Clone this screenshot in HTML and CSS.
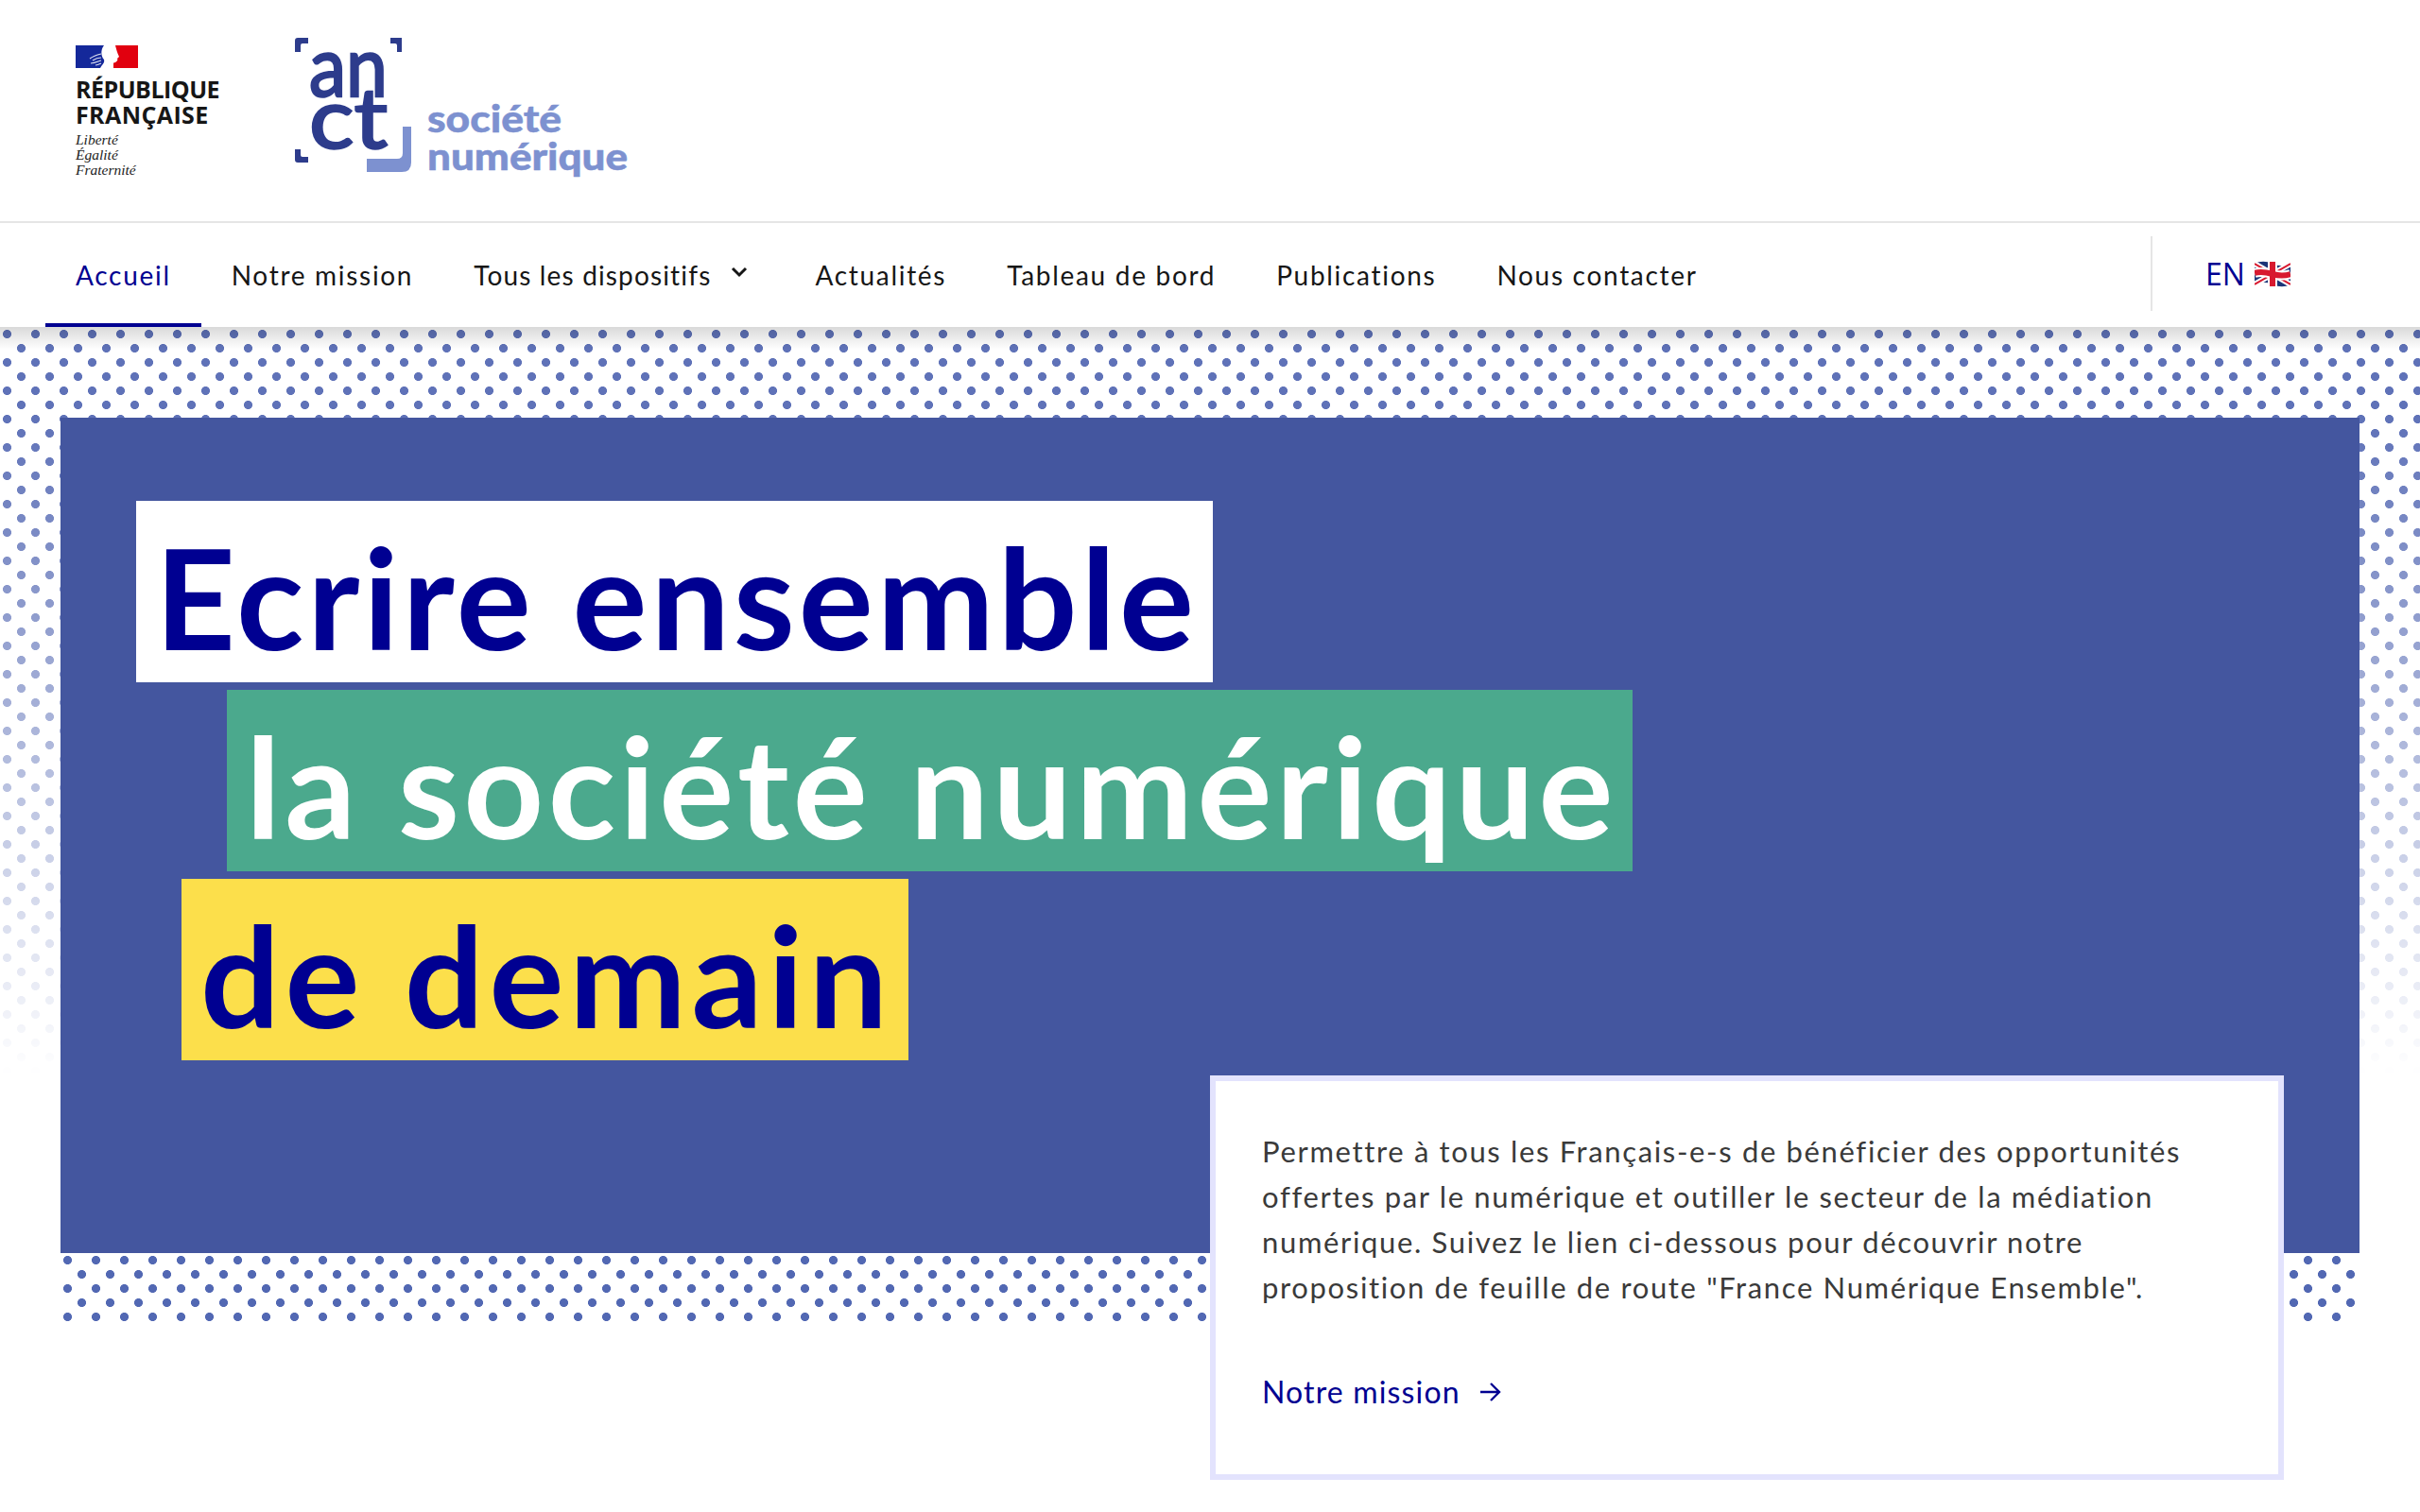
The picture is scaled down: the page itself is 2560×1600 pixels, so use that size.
FILE: index.html
```html
<!DOCTYPE html>
<html lang="fr">
<head>
	<meta charset="UTF-8">
	<title>Société numérique</title>
	<link rel="stylesheet" href="styles.css">
</head>
<body>
	<header class="top">
		<div class="rf">
			<svg class="rf-flag" viewBox="0 0 66 24" width="66" height="24">
				<rect width="66" height="24" fill="#fff"/>
				<rect width="34" height="24" fill="#14289a"/>
				<rect x="40" width="26" height="24" fill="#e1000f"/>
				<path d="M30 0H42C43 4 44 8 46 12L44 14C45 15 44 17 42 18C40 19 37 19 37 21L40 24H26C28 20 31 19 30 15C27 12 26 5 30 0Z" fill="#fff"/>
				<path d="M15 14c4-3 8-4 12-5M18 16c3-2 6-3 9-3M16 19c4 0 8-2 11-3M21 21c2 0 4-1 6-2" fill="none" stroke="#fff" stroke-width="1.1" opacity=".85"/>
			</svg>
			<p class="rf-name">RÉPUBLIQUE<span class="rf-second">FRANÇAISE</span></p>
			<p class="rf-motto">Liberté<br>Égalité<br>Fraternité</p>
		</div>
		<svg class="anct" viewBox="0 0 360 150" width="360" height="150">
			<path d="M2 17V5q0-3 3-3H16V8H10Q8 8 8 10V17Z" fill="#2d3c8c"/>
			<path d="M115 2H103V8H108Q110 8 110 10V17H115Z" fill="#2d3c8c"/>
			<path d="M2 120V131q0 3 3 3H16V128H10Q8 128 8 126V120Z" fill="#2d3c8c"/>
			<path d="M116 96H125V134Q125 144 115 144H78V130H110Q116 130 116 124Z" fill="#7d91d0"/>
			<text class="anct-big" x="17" y="64" textLength="83" lengthAdjust="spacingAndGlyphs">an</text>
			<text class="anct-big" x="17" y="119" textLength="83" lengthAdjust="spacingAndGlyphs">ct</text>
			<text class="anct-small" x="142" y="102" textLength="142" lengthAdjust="spacingAndGlyphs">société</text>
			<text class="anct-small" x="142" y="142" textLength="212" lengthAdjust="spacingAndGlyphs">numérique</text>
		</svg>
	</header>

	<nav class="nav">
		<ul class="nav-list">
			<li class="nav-item active">Accueil</li>
			<li class="nav-item">Notre mission</li>
			<li class="nav-item nav-tous">Tous les dispositifs<svg class="chevron" viewBox="0 0 20 12" width="20" height="12"><path d="M3 2l7 7 7-7" fill="none" stroke="#161616" stroke-width="3"/></svg></li>
			<li class="nav-item">Actualités</li>
			<li class="nav-item">Tableau de bord</li>
			<li class="nav-item">Publications</li>
			<li class="nav-item">Nous contacter</li>
		</ul>
		<div class="lang">
			<span>EN</span>
			<svg class="uk" viewBox="0 0 38 28" width="38" height="28">
				<path d="M0 3c6-3 12-3 19 0s13 3 19 0v22c-6 3-12 3-19 0S6 22 0 25z" fill="#1c3578"/>
				<path d="M0 3L38 25M38 3L0 25" stroke="#fff" stroke-width="6"/>
				<path d="M0 3L38 25M38 3L0 25" stroke="#d8192f" stroke-width="2"/>
				<path d="M0 13c6-2 12-1 19 1s13 2 19 0" stroke="#fff" stroke-width="10" fill="none"/>
				<path d="M19 1V27" stroke="#fff" stroke-width="10"/>
				<path d="M0 13c6-2 12-1 19 1s13 2 19 0" stroke="#d8192f" stroke-width="6" fill="none"/>
				<path d="M19 1V27" stroke="#d8192f" stroke-width="6"/>
			</svg>
		</div>
	</nav>

	<main class="hero">
		<div class="dots dots-top"></div>
		<div class="panel">
			<h1 class="title">
				<span class="line line-white">Ecrire ensemble</span>
				<span class="line line-green">la société numérique</span>
				<span class="line line-yellow">de demain</span>
			</h1>
		</div>
		<div class="dots dots-bottom"></div>
		<section class="card">
			<p class="card-text">Permettre à tous les Français-e-s de bénéficier des opportunités<br>offertes par le numérique et outiller le secteur de la médiation<br>numérique. Suivez le lien ci-dessous pour découvrir notre<br>proposition de feuille de route "France Numérique Ensemble".</p>
			<a class="card-link" href="#">Notre mission<svg class="arrow" viewBox="0 0 24 22" width="24" height="22"><path d="M1 11h20M12 2l9 9-9 9" fill="none" stroke="#000091" stroke-width="2.4"/></svg></a>
		</section>
	</main>
</body>
</html>
```

FILE: styles.css
```css
*{padding: 0;margin: 0;box-sizing: border-box;}
body{
	background: #fff;
	font-family: "Lato", "Noto Sans", sans-serif;
	color: #161616;
}

/* logos */
.top{
	height: 236px;
	display: flex;
	align-items: flex-start;
	padding: 48px 0 0 80px;
	border-bottom: 2px solid #e5e5e5;
}
.rf{
	width: 230px;
}
.rf-flag{
	display: block;
}
.rf-name{
	margin-top: 9px;
	font-family: "Open Sans", sans-serif;
	font-weight: 700;
	font-size: 25px;
	line-height: 27px;
	letter-spacing: -0.5px;
	color: #161616;
}
.rf-second{
	display: block;
	letter-spacing: 0.4px;
}
.rf-motto{
	margin-top: 5px;
	font-family: "Liberation Serif", serif;
	font-style: italic;
	font-size: 15.5px;
	line-height: 16px;
	color: #222;
}
.anct{
	display: block;
	margin: -10px 0 0 0;
	overflow: visible;
}
.anct-big{
	font-family: "Lato", sans-serif;
	font-size: 90px;
	font-weight: 400;
	fill: #2d3c8c;
	stroke: #2d3c8c;
	stroke-width: 2.5px;
}
.anct-small{
	font-family: "Lato", sans-serif;
	font-size: 40px;
	font-weight: 900;
	fill: #7d91d0;
	stroke: #7d91d0;
	stroke-width: 0.5px;
}

/* menu */
.nav{
	height: 110px;
	display: flex;
	justify-content: space-between;
	position: relative;
	z-index: 2;
	background: #fff;
	padding-left: 48px;
}
.nav-list{
	display: flex;
	list-style: none;
}
.nav-item{
	display: flex;
	align-items: center;
	padding: 0 32px;
	font-size: 28px;
	letter-spacing: 1.7px;
	white-space: nowrap;
	color: #161616;
}
.nav-item.active{
	color: #000091;
	box-shadow: inset 0 -4px 0 #000091;
}
.nav-tous{
	letter-spacing: 1.15px;
}
.chevron{
	margin: -6px 6px 0 20px;
}
.lang{
	width: 285px;
	margin-top: 14px;
	height: 79px;
	border-left: 2px solid #e5e5e5;
	display: flex;
	align-items: center;
	gap: 10px;
	padding-left: 56px;
	font-family: "Open Sans", sans-serif;
	font-size: 32px;
	color: #000091;
}

/* hero */
.hero{
	position: relative;
	height: 1254px;
	padding: 96px 64px 0;
}
.hero::before{
	content: "";
	position: absolute;
	z-index: 1;
	left: 0;
	right: 0;
	top: 0;
	height: 24px;
	background: linear-gradient(rgba(0,0,0,.15), rgba(0,0,0,0));
}
.dots{
	position: absolute;
	background-size: 30px 30px;
}
.dots-top{
	left: 0;
	right: 0;
	top: 0;
	height: 790px;
	background-image:
		radial-gradient(circle at 7.5px 7.5px, #5f72b8 4.2px, transparent 4.8px),
		radial-gradient(circle at 22.5px 22.5px, #5f72b8 4.2px, transparent 4.8px);
	-webkit-mask-image: linear-gradient(#000 12%, transparent 100%);
	mask-image: linear-gradient(#000 12%, transparent 100%);
}
.dots-bottom{
	left: 64px;
	right: 64px;
	top: 980px;
	height: 75px;
	background-image:
		radial-gradient(circle at 7.5px 7.5px, #5268b3 4.2px, transparent 4.8px),
		radial-gradient(circle at 22.5px 22.5px, #5268b3 4.2px, transparent 4.8px);
}
.panel{
	position: relative;
	z-index: 1;
	height: 884px;
	background: #44569f;
	padding: 88px 0 0 80px;
}
.title{
	font-size: 148px;
	font-weight: 700;
	line-height: 202px;
}
.line{
	display: block;
	width: fit-content;
	height: 192px;
	margin-bottom: 8px;
	padding: 0 16px 0 20px;
	white-space: nowrap;
}
.line-white{
	background: #fff;
	color: #000091;
	letter-spacing: 3.9px;
}
.line-green{
	margin-left: 96px;
	background: #4ba98d;
	color: #fff;
	letter-spacing: 4.35px;
}
.line-yellow{
	margin-left: 48px;
	background: #fcdf4b;
	color: #000091;
	letter-spacing: 5.6px;
}
.card{
	position: absolute;
	z-index: 2;
	left: 1280px;
	top: 792px;
	width: 1136px;
	height: 428px;
	border: 6px solid #e3e3fd;
	background: #fff;
	padding: 50px 49px;
}
.card-text{
	font-size: 31px;
	line-height: 48px;
	letter-spacing: 1.65px;
	color: #3a3a3a;
}
.card-link{
	display: inline-flex;
	align-items: center;
	gap: 20px;
	margin-top: 67px;
	font-size: 32px;
	letter-spacing: 1.15px;
	color: #000091;
	text-decoration: none;
}
```
